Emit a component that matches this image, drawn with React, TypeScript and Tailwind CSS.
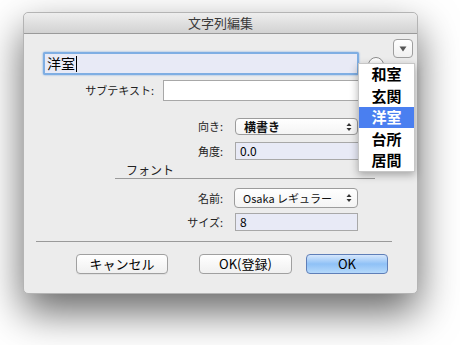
import React from "react";

const jp = { fontFamily: '"Noto Sans CJK JP", "Noto Sans", sans-serif' };

const menuItems = ["和室", "玄関", "洋室", "台所", "居間"];

const Arrows = () => (
  <svg width="6" height="10" viewBox="0 0 6 10" className="mr-[5px]">
    <path d="M0.5 4 L3 1 L5.5 4 Z" fill="#333" />
    <path d="M0.5 6 L3 9 L5.5 6 Z" fill="#333" />
  </svg>
);

const Label = ({ text, width }: { text: string; width: string }) => (
  <div className={`${width} shrink-0 pr-0 text-right text-[11px] text-[#222]`}>{text}</div>
);

export default function App() {
  return (
    <div className="relative h-[345px] w-[460px] overflow-hidden bg-white" style={jp}>
      <div className="ml-[23px] mt-[12px] flex h-[282px] w-[395px] flex-col overflow-visible rounded-[5px] border border-[#b4b4b4] bg-[#ececec] shadow-[0_18px_40px_rgba(0,0,0,0.6)]">
        <div className="flex h-[21px] shrink-0 items-center justify-center rounded-t-[5px] border-b border-[#9a9a9a] bg-gradient-to-b from-[#eeeeee] to-[#d2d2d2] text-[13px] text-[#3a3a3a]">
          文字列編集
        </div>

        <div className="relative flex flex-1 flex-col pt-[18px]">
          {/* triangle menu button */}
          <div className="absolute left-[369px] top-[5px] flex h-[19px] w-[20px] items-center justify-center rounded-[4px] border border-[#9e9e9e] bg-gradient-to-b from-white to-[#f0f0f0]">
            <svg width="8" height="6" viewBox="0 0 8 6">
              <path d="M0.5 0.5 L7.5 0.5 L4 5.5 Z" fill="#555" />
            </svg>
          </div>

          {/* main field row */}
          <div className="flex items-start">
            <div className="ml-[19px] flex h-[23px] w-[316px] items-center rounded-[2px] border-2 border-[#7faee3] bg-[#e8eaf6] pl-[2px] text-[14px] text-black shadow-[0_0_2px_#6b9fe0]">
              洋室
              <span className="ml-[1px] inline-block h-[16px] w-[1px] bg-black" />
            </div>
            <div className="ml-[9px] mt-[5px] h-[16px] w-[16px] rounded-full border border-[#8c8c8c] bg-gradient-to-b from-white to-[#e8e8e8]" />
          </div>

          {/* subtext row */}
          <div className="mt-[5px] flex items-center">
            <Label text="サブテキスト:" width="w-[130px]" />
            <div className="ml-[9px] h-[21px] w-[196px] border border-[#a8a8a8] bg-white" />
          </div>

          {/* 向き */}
          <div className="mt-[17px] flex items-center">
            <Label text="向き:" width="w-[199px]" />
            <div className="ml-[12px] flex h-[17px] w-[123px] items-center justify-between rounded-[4px] border border-[#9c9c9c] bg-gradient-to-b from-white to-[#f4f4f4] pl-[8px] text-[12px] font-bold text-[#111]">
              横書き
              <Arrows />
            </div>
          </div>

          {/* 角度 */}
          <div className="mt-[7px] flex items-center">
            <Label text="角度:" width="w-[199px]" />
            <div className="ml-[12px] flex h-[18px] w-[124px] items-center border border-[#a8a8a8] bg-[#e8eaf6] pl-[4px] text-[12px] text-black">
              0.0
            </div>
          </div>

          {/* フォント */}
          <div className="ml-[102px] mt-[1px] text-[12px] leading-[17px] text-[#222]">フォント</div>
          <div className="ml-[91px] w-[260px] border-t border-[#9a9a9a]" />

          {/* 名前 */}
          <div className="mt-[9px] flex items-center">
            <Label text="名前:" width="w-[199px]" />
            <div className="ml-[11px] flex h-[20px] w-[124px] items-center justify-between rounded-[4px] border border-[#9c9c9c] bg-gradient-to-b from-white to-[#f4f4f4] pl-[8px] text-[11px] text-[#111]">
              Osaka レギュラー
              <Arrows />
            </div>
          </div>

          {/* サイズ */}
          <div className="mt-[5px] flex items-center">
            <Label text="サイズ:" width="w-[199px]" />
            <div className="ml-[12px] flex h-[18px] w-[123px] items-center border border-[#a8a8a8] bg-[#e8eaf6] pl-[4px] text-[12px] text-black">
              8
            </div>
          </div>

          <div className="ml-[12px] mt-[10px] w-[356px] border-t border-[#9a9a9a]" />

          {/* buttons */}
          <div className="mt-[12px] flex items-center text-[13px] text-black">
            <div className="ml-[52px] flex h-[20px] w-[92px] items-center justify-center rounded-[4px] border border-[#a0a0a0] bg-gradient-to-b from-white to-[#f0f0f0] shadow-[0_1px_0_rgba(0,0,0,0.05)]">
              キャンセル
            </div>
            <div className="ml-[31px] flex h-[20px] w-[93px] items-center justify-center rounded-[4px] border border-[#a0a0a0] bg-gradient-to-b from-white to-[#f0f0f0]">
              OK(登録)
            </div>
            <div className="ml-[14px] flex h-[20px] w-[82px] items-center justify-center rounded-[4px] border border-[#5f7fb8] bg-gradient-to-b from-[#d6e7fc] via-[#8fc1f6] to-[#b5d9fb]">
              OK
            </div>
          </div>

          {/* popup menu */}
          <div className="absolute left-[334px] top-[29px] w-[57px] border border-[#c6c6c6] bg-white shadow-[0_3px_8px_rgba(0,0,0,0.3)]">
            {menuItems.map((item) => (
              <div
                key={item}
                className={`flex h-[21.4px] items-center justify-center text-[15px] font-bold ${
                  item === "洋室" ? "bg-[#4a7ff0] text-white" : "text-black"
                }`}
              >
                {item}
              </div>
            ))}
          </div>
        </div>
      </div>
    </div>
  );
}
